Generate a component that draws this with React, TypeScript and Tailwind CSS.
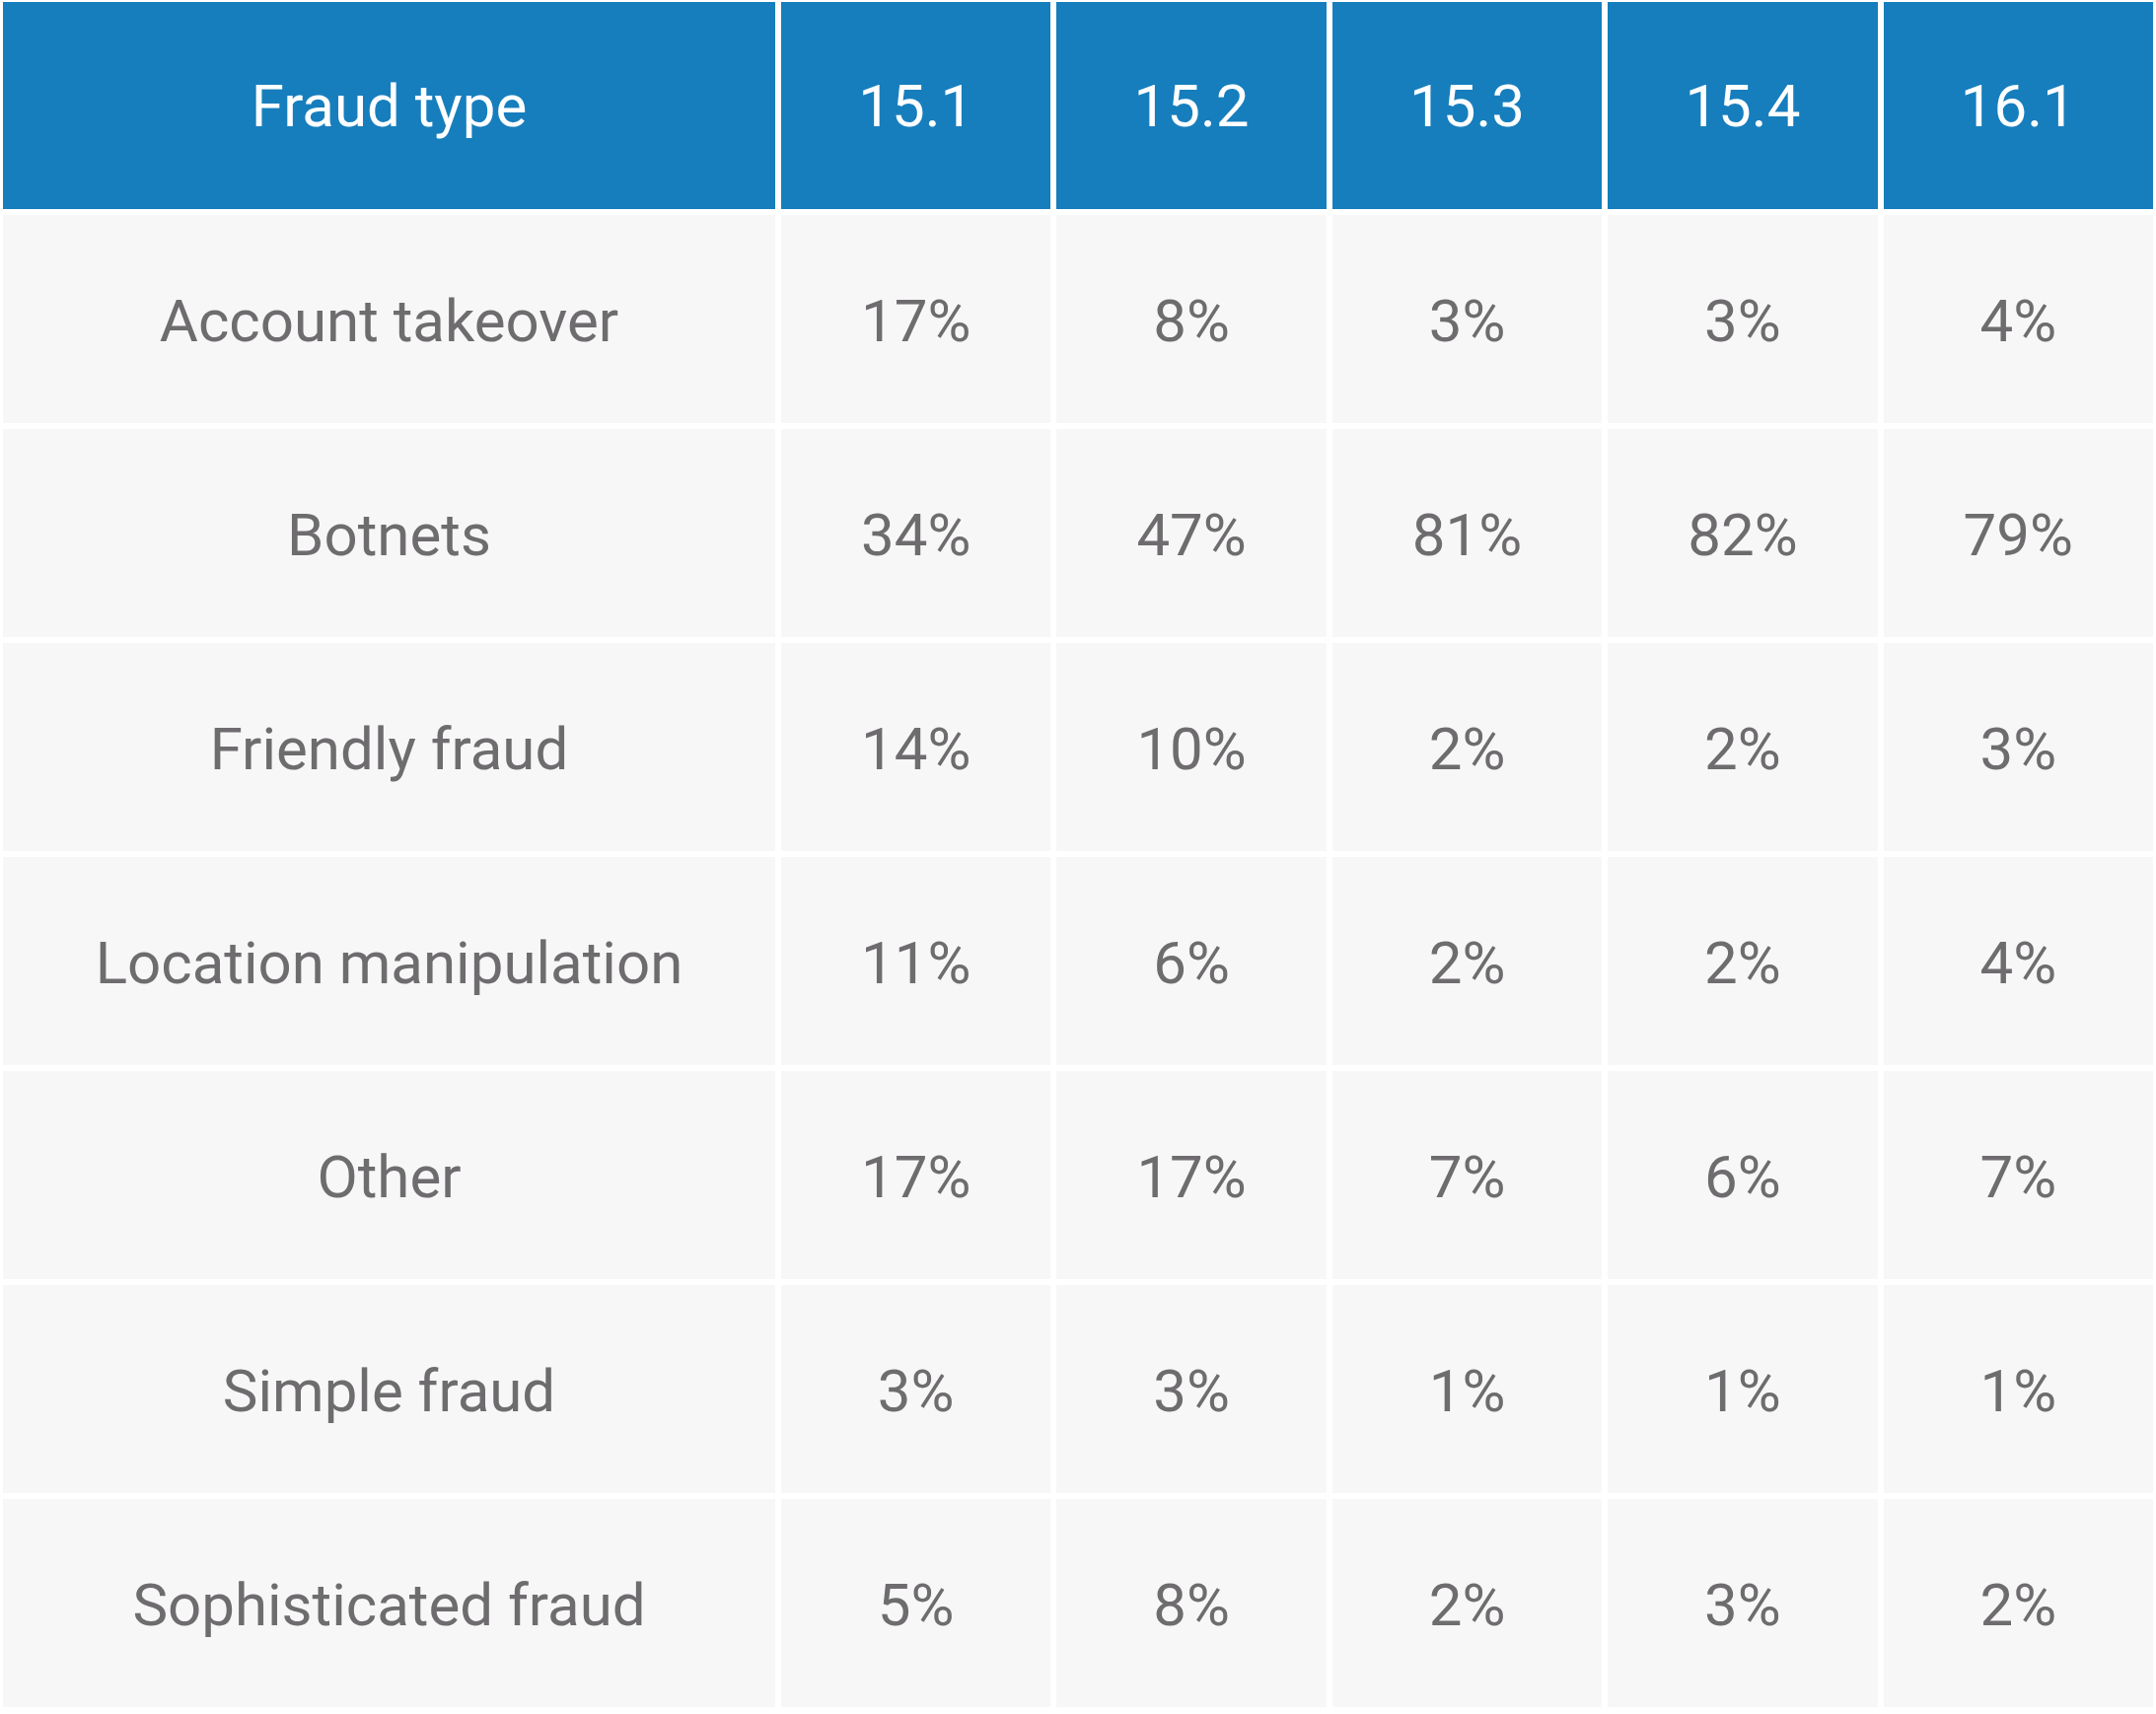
import React from 'react';

const periods = ['15.1', '15.2', '15.3', '15.4', '16.1'];

const rows: [string, string[]][] = [
    ['Account takeover', ['17%', '8%', '3%', '3%', '4%']],
    ['Botnets', ['34%', '47%', '81%', '82%', '79%']],
    ['Friendly fraud', ['14%', '10%', '2%', '2%', '3%']],
    ['Location manipulation', ['11%', '6%', '2%', '2%', '4%']],
    ['Other', ['17%', '17%', '7%', '6%', '7%']],
    ['Simple fraud', ['3%', '3%', '1%', '1%', '1%']],
    ['Sophisticated fraud', ['5%', '8%', '2%', '3%', '2%']],
];

export default function App() {
    return (
        <div className="w-[2186px] h-[1738px] bg-white pt-[2px] px-[3px] font-['Roboto',sans-serif] text-[60px]">
            <div className="grid grid-cols-[783px_repeat(5,1fr)] grid-rows-[210px_repeat(7,211px)] gap-[6px]">
                <div className="bg-[#167ebd] text-white flex items-center justify-center pt-[2px]">Fraud type</div>
                {periods.map((p) => (
                    <div key={p} className="bg-[#167ebd] text-white flex items-center justify-center pt-[2px]">{p}</div>
                ))}
                {rows.map(([name, vals]) => (
                    <React.Fragment key={name}>
                        <div className="bg-[#f7f7f7] text-[#6e6c6e] flex items-center justify-center pt-[4px]">{name}</div>
                        {vals.map((v, i) => (
                            <div key={i} className="bg-[#f7f7f7] text-[#6e6c6e] flex items-center justify-center pt-[4px]">{v}</div>
                        ))}
                    </React.Fragment>
                ))}
            </div>
        </div>
    );
}
